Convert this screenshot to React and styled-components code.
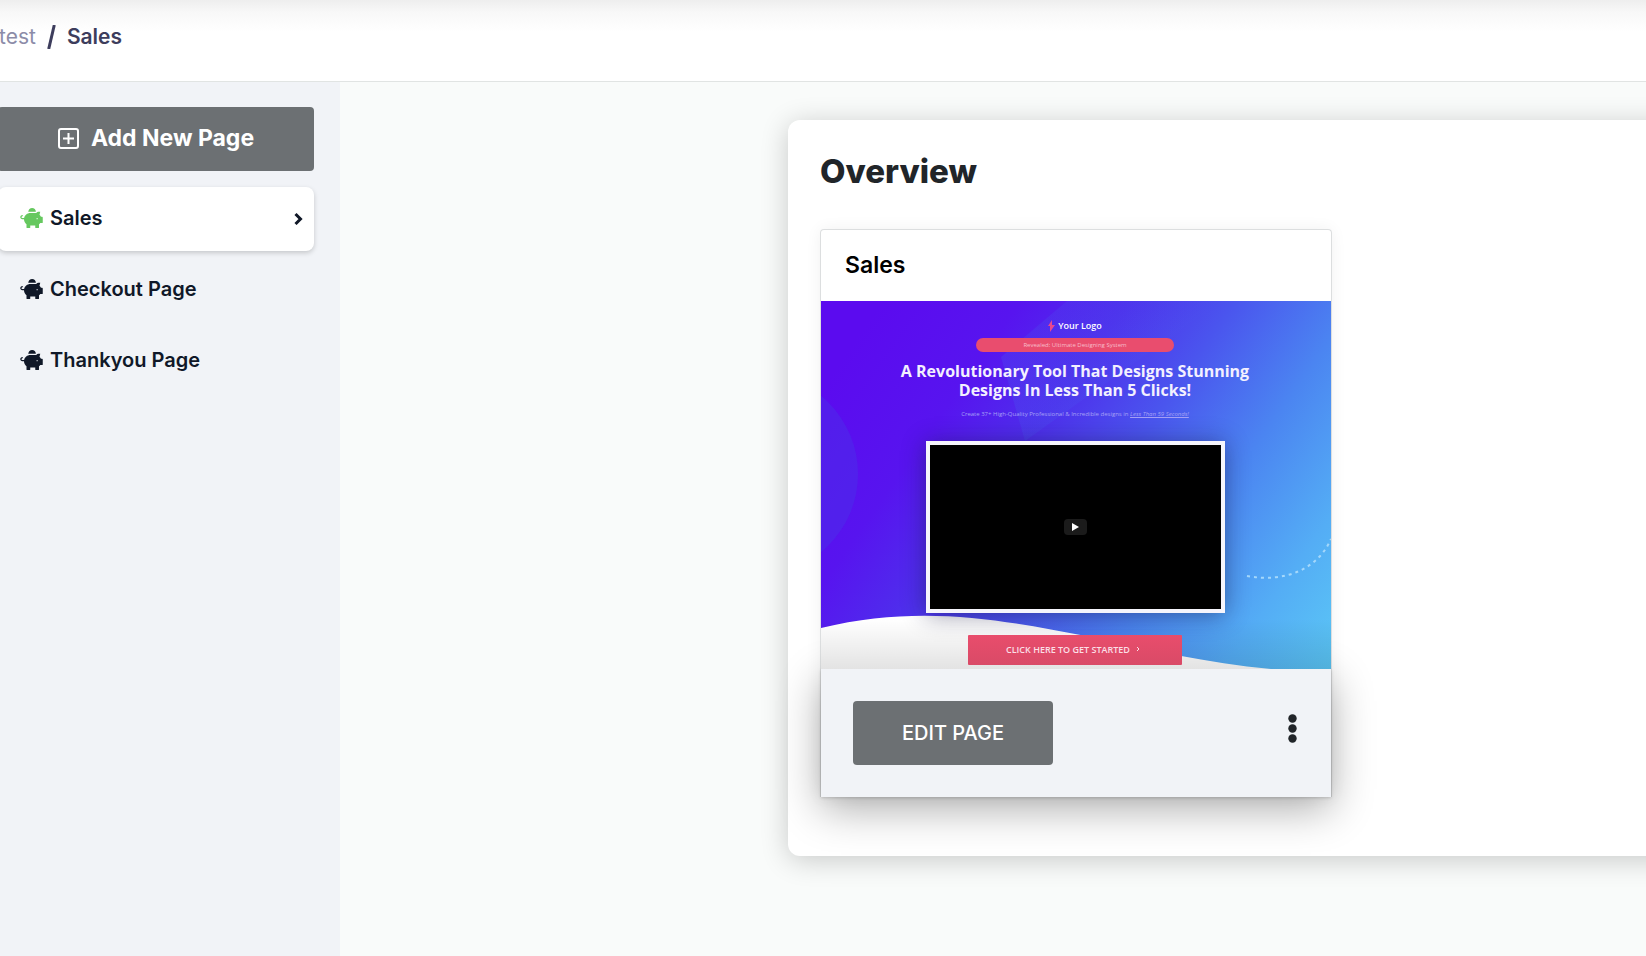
import React from "react";
import styled, { createGlobalStyle } from "styled-components";
import { FaPiggyBank } from "react-icons/fa";

const GlobalStyle = createGlobalStyle`
  *, *::before, *::after { box-sizing: border-box; }
  body {
    margin: 0;
    background: #f9fbfa;
    color: #212529;
    font-family: Inter, "Liberation Sans", sans-serif;
  }
  h1, h2, h3, p, ul, ol { margin: 0; padding: 0; }
  button { border: 0; font-family: inherit; cursor: pointer; }
`;

const Page = styled.div`
  display: flex;
  flex-direction: column;
  min-height: 100vh;
`;

const TopBar = styled.header`
  height: 82px;
  padding-top: 22px;
  border-bottom: 1px solid #e1e4e3;
  background: linear-gradient(#eeeeee, #f8f8f8 12px, #ffffff 32px);
`;

const Crumbs = styled.ol`
  display: flex;
  align-items: center;
  gap: 11px;
  margin-left: -1px;
  list-style: none;
  font-size: 21px;
  line-height: 30px;
  font-weight: 600;
  color: #3d3d5c;
`;

const CrumbLink = styled.a`
  color: #8c8ca8;
  font-weight: 400;
  text-decoration: none;
`;

const Separator = styled.li`
  display: flex;
`;

const Body = styled.div`
  display: flex;
  flex: 1;
  overflow: hidden;
`;

const Sidebar = styled.aside`
  flex: 0 0 340px;
  padding: 25px 26px 25px 0;
  background: #f1f3f7;
`;

const AddButton = styled.button`
  display: flex;
  align-items: center;
  justify-content: center;
  gap: 12px;
  width: calc(100% + 2px);
  height: 64px;
  margin: 0 0 16px -2px;
  padding: 0 6px 2px;
  border-radius: 4px;
  background: #6c7073;
  color: #ffffff;
  font-size: 23px;
  font-weight: 700;
`;

const PageList = styled.ul`
  display: flex;
  flex-direction: column;
  gap: 7px;
  margin-left: -2px;
  list-style: none;
`;

const PageLink = styled.a`
  display: flex;
  align-items: center;
  gap: 7px;
  height: 64px;
  padding: 0 10px 2px 22px;
  border-radius: 8px;
  color: #101828;
  background: ${(p) => (p.$active ? "#ffffff" : "transparent")};
  box-shadow: ${(p) => (p.$active ? "0 2px 5px rgba(0, 0, 0, 0.18)" : "none")};
  font-size: 20px;
  font-weight: 600;
  text-decoration: none;

  > svg:first-child {
    width: 23px;
    height: 20px;
    color: ${(p) => (p.$active ? "#66c85f" : "#101828")};
  }
`;

const Chevron = styled.svg`
  width: 11px;
  height: 14px;
  margin-left: auto;
`;

const Main = styled.main`
  flex: 1;
  min-width: 0;
  padding: 38px 0 38px 448px;
`;

const Panel = styled.section`
  margin-right: -48px;
  padding: 31px 80px 59px 32px;
  border-radius: 12px;
  background: #ffffff;
  box-shadow: 0 4px 28px rgba(0, 0, 0, 0.2);
`;

const PanelTitle = styled.h1`
  margin-bottom: 38px;
  font-size: 33px;
  line-height: 40px;
  font-weight: 800;
`;

const PageCard = styled.article`
  max-width: 512px;
  border: 1px solid #dcdedf;
  border-bottom: 0;
  border-radius: 4px 4px 0 0;
  background: #ffffff;
  box-shadow: 0 0 16px rgba(0, 0, 0, 0.06);
`;

const CardTitle = styled.h2`
  padding: 20px 24px;
  color: #000000;
  font-size: 23px;
  line-height: 31px;
  font-weight: 600;
`;

const CardFooter = styled.footer`
  display: flex;
  align-items: center;
  justify-content: space-between;
  height: 128px;
  padding: 0 32px;
  background: #f1f3f7;
  box-shadow: 0 12px 40px rgba(0, 0, 0, 0.32), 0 1px 3px rgba(0, 0, 0, 0.16);
`;

const EditButton = styled.button`
  width: 200px;
  height: 64px;
  border-radius: 4px;
  background: #6c7073;
  color: #ffffff;
  font-size: 20px;
  font-weight: 500;
`;

const MenuButton = styled.button`
  display: flex;
  padding: 0 2px 10px;
  background: transparent;
  color: #212529;
`;

const Preview = styled.div`
  position: relative;
  height: 368px;
  overflow: hidden;
  background: linear-gradient(
    125deg,
    #5b0bef 8%,
    #5714ef 26%,
    #4e30ec 40%,
    #4a55ee 54%,
    #4b85f1 70%,
    #54adf5 86%,
    #5bc7f6 100%
  );
  color: #ffffff;
  font-family: "Open Sans", "Noto Sans", sans-serif;
`;

const Artwork = styled.svg`
  position: absolute;
  inset: 0;
  width: 100%;
  height: 100%;
`;

const PreviewContent = styled.div`
  position: relative;
  display: flex;
  flex-direction: column;
  align-items: center;
  padding: 18px 2px 0 0;
  text-align: center;
`;

const Brand = styled.div`
  display: flex;
  align-items: center;
  gap: 3px;
  margin-bottom: 5px;
  font-size: 9px;
  line-height: 14px;
  font-weight: 600;
`;

const Pill = styled.p`
  width: 198px;
  border-radius: 7px;
  background: #e94d6e;
  color: #f8bdca;
  font-size: 6px;
  line-height: 14px;
`;

const Headline = styled.h3`
  margin: 10px 0 9px;
  font-size: 16px;
  line-height: 19px;
  font-weight: 700;
  color: #f3f0ff;
`;

const Tagline = styled.p`
  margin-bottom: 22px;
  color: #a5a0f6;
  font-size: 6px;
  line-height: 10px;

  em { text-decoration: underline; }
`;

const Video = styled.div`
  display: flex;
  align-items: center;
  justify-content: center;
  width: 299px;
  height: 172px;
  margin-bottom: 22px;
  border: 4px solid #f6f5fc;
  background: #000000;
  box-shadow: 0 2px 22px rgba(20, 20, 60, 0.45);
`;

const PlayButton = styled.button`
  display: flex;
  align-items: center;
  justify-content: center;
  width: 23px;
  height: 16px;
  padding: 0;
  border-radius: 4px;
  background: #1b1b1b;
`;

const CallToAction = styled.button`
  display: flex;
  align-items: center;
  justify-content: center;
  gap: 6px;
  width: 214px;
  height: 30px;
  padding: 0 4px 2px 0;
  border-radius: 1px;
  background: linear-gradient(#e84d6c, #d94a67);
  color: #fbdfe6;
  font-size: 9px;
  font-weight: 600;
`;

const pages = [
  { name: "Sales", active: true },
  { name: "Checkout Page" },
  { name: "Thankyou Page" },
];

function PlusBox() {
  return (
    <svg width="21" height="21" viewBox="0 0 21 21" fill="none" stroke="currentColor" strokeWidth="2" aria-hidden="true">
      <rect x="1" y="1" width="19" height="19" rx="2" />
      <path d="M10.5 5v11M5 10.5h11" />
    </svg>
  );
}

function SalesPreview() {
  return (
    <Preview>
      <Artwork viewBox="0 0 510 368" preserveAspectRatio="none" aria-hidden="true">
        <defs>
          <linearGradient id="shade" x1="0" y1="0" x2="0" y2="1">
            <stop offset="0" stopColor="#000000" stopOpacity="0" />
            <stop offset="1" stopColor="#000000" stopOpacity="0.11" />
          </linearGradient>
          <linearGradient id="glow" x1="0" y1="0" x2="1" y2="0">
            <stop offset="0" stopColor="#4668f0" stopOpacity="0.22" />
            <stop offset="1" stopColor="#4668f0" stopOpacity="0" />
          </linearGradient>
        </defs>
        <circle cx="-64" cy="173" r="101" fill="#4838e8" fillOpacity="0.4" />
        <path d="M246 0H400L204 140L180 56Z" fill="url(#glow)" />
        <path d="M426 275C464 282 497 268 510 238" fill="none" stroke="#a5d8fb" strokeWidth="2" strokeDasharray="3 4" />
        <path d="M0 327C100 303 180 319 265 335C330 349 385 362 450 368H0Z" fill="#ffffff" />
        <rect y="318" width="510" height="50" fill="url(#shade)" />
      </Artwork>
      <PreviewContent>
        <Brand>
          <svg width="7" height="12" viewBox="0 0 7 12" aria-hidden="true">
            <path d="M4 0L0 6h2L2 12L7 5H4Z" fill="#e9478f" />
          </svg>
          Your Logo
        </Brand>
        <Pill>Revealed: Ultimate Designing System</Pill>
        <Headline>
          A Revolutionary Tool That Designs Stunning
          <br />
          Designs In Less Than 5 Clicks!
        </Headline>
        <Tagline>
          Create 37+ High-Quality Professional &amp; Incredible designs in <em>Less Than 59 Seconds!</em>
        </Tagline>
        <Video>
          <PlayButton aria-label="Play video">
            <svg width="7" height="8" viewBox="0 0 7 8" aria-hidden="true">
              <path d="M0 0L7 4L0 8Z" fill="#ffffff" />
            </svg>
          </PlayButton>
        </Video>
        <CallToAction>
          CLICK HERE TO GET STARTED
          <svg width="4" height="6" viewBox="0 0 4 6" fill="none" stroke="currentColor" aria-hidden="true">
            <path d="M1 1L3 3L1 5" />
          </svg>
        </CallToAction>
      </PreviewContent>
    </Preview>
  );
}

export default function App() {
  return (
    <Page>
      <GlobalStyle />
      <TopBar>
        <nav aria-label="Breadcrumb">
          <Crumbs>
            <li><CrumbLink href="#test">test</CrumbLink></li>
            <Separator aria-hidden="true">
              <svg width="9" height="24" viewBox="0 0 9 24" fill="none" stroke="currentColor" strokeWidth="3">
                <path d="M7.300 0L1.700 24" />
              </svg>
            </Separator>
            <li aria-current="page">Sales</li>
          </Crumbs>
        </nav>
      </TopBar>
      <Body>
        <Sidebar>
          <AddButton>
            <PlusBox />
            Add New Page
          </AddButton>
          <PageList>
            {pages.map(({ name, active }) => (
              <li key={name}>
                <PageLink href="#page" $active={active}>
                  <FaPiggyBank aria-hidden="true" />
                  {name}
                  {active && (
                    <Chevron viewBox="0 0 11 14" fill="none" stroke="currentColor" strokeWidth="3" aria-hidden="true">
                      <path d="M2.500 3L7.500 8L2.500 13" />
                    </Chevron>
                  )}
                </PageLink>
              </li>
            ))}
          </PageList>
        </Sidebar>
        <Main>
          <Panel>
            <PanelTitle>Overview</PanelTitle>
            <PageCard>
              <CardTitle>Sales</CardTitle>
              <SalesPreview />
              <CardFooter>
                <EditButton>EDIT PAGE</EditButton>
                <MenuButton aria-label="More actions">
                  <svg width="9" height="29" viewBox="0 0 9 29" fill="currentColor" aria-hidden="true">
                    <circle cx="4.500" cy="4.500" r="4.200" />
                    <circle cx="4.500" cy="14.500" r="4.200" />
                    <circle cx="4.500" cy="24.500" r="4.200" />
                  </svg>
                </MenuButton>
              </CardFooter>
            </PageCard>
          </Panel>
        </Main>
      </Body>
    </Page>
  );
}
